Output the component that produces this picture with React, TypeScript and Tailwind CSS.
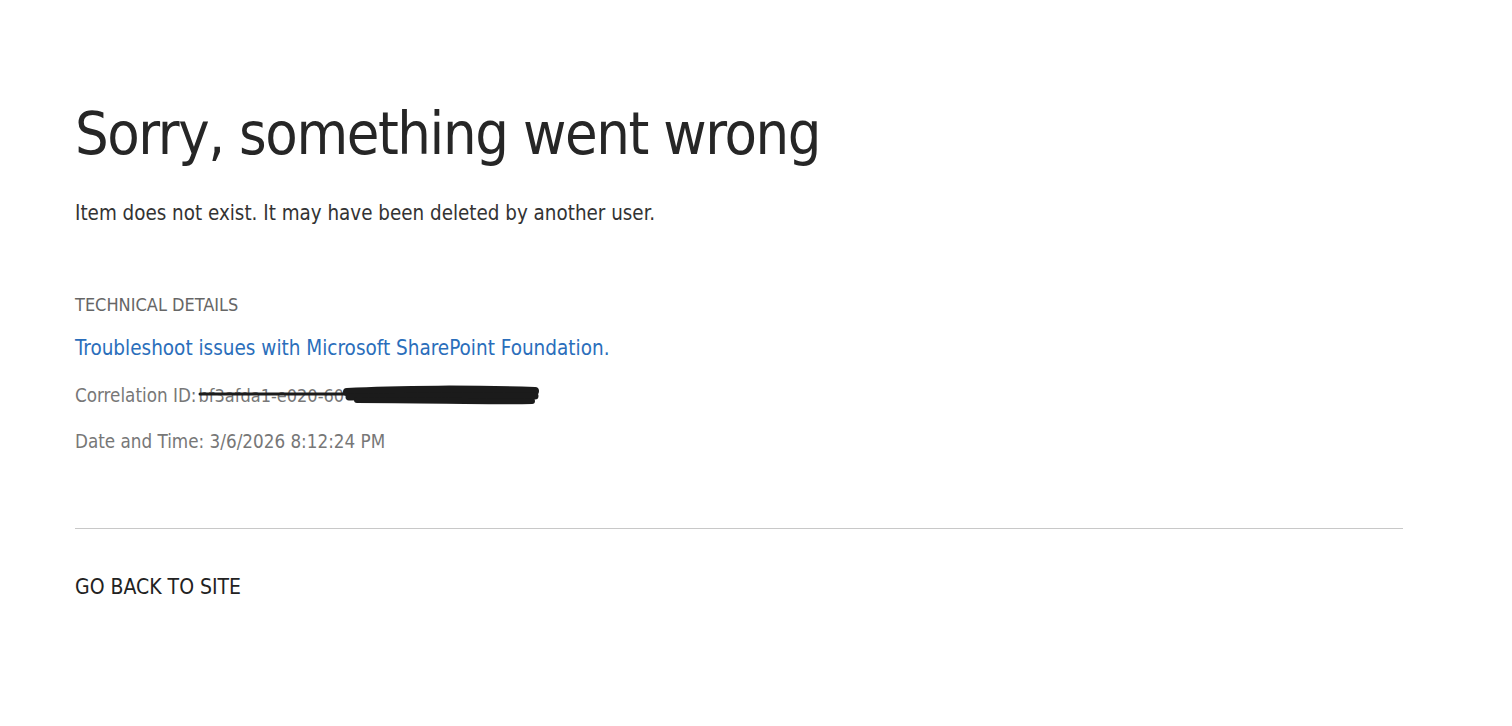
import React from "react";

const font = { fontFamily: '"DejaVu Sans Condensed", "DejaVu Sans", sans-serif' };

const Redacted = () => (
  <span className="relative inline-block w-[342px] h-[22px] align-middle">
    <span className="absolute left-[2px] top-0 text-[#777] text-[18px] leading-[22px]">bf3afda1-e020-60</span>
    <svg className="absolute inset-0" width="342" height="22" viewBox="0 0 342 22" fill="none">
      <path d="M3 9 L150 9" stroke="#1b1b1b" strokeWidth="3" strokeLinecap="round" />
      <path d="M150 7 C200 4 280 4 338 6" stroke="#1b1b1b" strokeWidth="8" strokeLinecap="round" />
      <path d="M152 12 C220 11 290 11 338 11" stroke="#1b1b1b" strokeWidth="7" strokeLinecap="round" />
      <path d="M160 15 C230 15 300 17 335 16" stroke="#1b1b1b" strokeWidth="6" strokeLinecap="round" />
    </svg>
  </span>
);

export default function App() {
  return (
    <div className="min-h-screen bg-white" style={font}>
      <div className="pl-[75px] pr-[109px] pt-[98px]">
        <h1 className="text-[59px] leading-[72px] text-[#262626] tracking-[-1.4px]">Sorry, something went wrong</h1>
        <p className="mt-[30px] text-[20.4px] leading-[26px] text-[#333]">
          Item does not exist. It may have been deleted by another user.
        </p>
        <div className="mt-[69px] text-[18px] leading-[20px] text-[#666]">TECHNICAL DETAILS</div>
        <a href="#" className="block mt-[20px] text-[20.5px] leading-[26px] text-[#2a6ebb]">
          Troubleshoot issues with Microsoft SharePoint Foundation.
        </a>
        <div className="mt-[22px] text-[18.7px] leading-[26px] text-[#777] flex items-center">
          <span>Correlation ID:</span>
          <Redacted />
        </div>
        <div className="mt-[20px] text-[18.7px] leading-[26px] text-[#777]">Date and Time: 3/6/2026 8:12:24 PM</div>
        <div className="mt-[73px] border-t border-[#c8c8c8]" />
        <a href="#" className="block mt-[45px] text-[21px] leading-[26px] text-[#222]">GO BACK TO SITE</a>
      </div>
    </div>
  );
}
